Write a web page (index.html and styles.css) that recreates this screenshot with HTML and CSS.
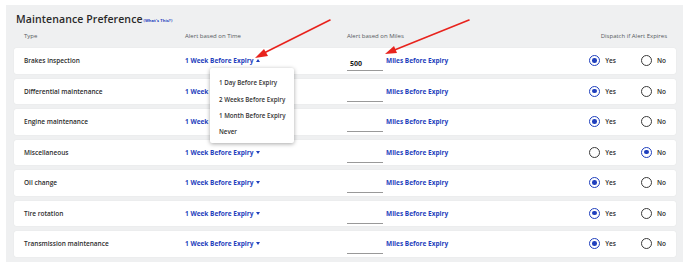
FILE: index.html
```html
<!DOCTYPE html>
<html>
<head>
<meta charset="utf-8">
<link rel="stylesheet" href="styles.css">
</head>
<body>
<div class="panel">
  <div class="title">Maintenance Preference <a class="whats">(What's This?)</a></div>
  <div class="grid head">
    <div>Type</div>
    <div>Alert based on Time</div>
    <div>Alert based on Miles</div>
    <div class="dispatch-h">Dispatch if Alert Expires</div>
  </div>

  <div class="grid row">
    <div class="name">Brakes inspection</div>
    <div class="time open">1 Week Before Expiry <span class="caret up"></span>
      <div class="menu">
        <div>1 Day Before Expiry</div>
        <div>2 Weeks Before Expiry</div>
        <div>1 Month Before Expiry</div>
        <div>Never</div>
      </div>
    </div>
    <div class="miles"><span class="input">500</span><span class="link">Miles Before Expiry</span></div>
    <div class="radios"><span class="radio on"></span><span class="lbl">Yes</span><span class="radio"></span><span class="lbl">No</span></div>
  </div>

  <div class="grid row">
    <div class="name">Differential maintenance</div>
    <div class="time">1 Week Before Expiry <span class="caret"></span></div>
    <div class="miles"><span class="input"></span><span class="link">Miles Before Expiry</span></div>
    <div class="radios"><span class="radio on"></span><span class="lbl">Yes</span><span class="radio"></span><span class="lbl">No</span></div>
  </div>

  <div class="grid row">
    <div class="name">Engine maintenance</div>
    <div class="time">1 Week Before Expiry <span class="caret"></span></div>
    <div class="miles"><span class="input"></span><span class="link">Miles Before Expiry</span></div>
    <div class="radios"><span class="radio on"></span><span class="lbl">Yes</span><span class="radio"></span><span class="lbl">No</span></div>
  </div>

  <div class="grid row">
    <div class="name">Miscellaneous</div>
    <div class="time">1 Week Before Expiry <span class="caret"></span></div>
    <div class="miles"><span class="input"></span><span class="link">Miles Before Expiry</span></div>
    <div class="radios"><span class="radio"></span><span class="lbl">Yes</span><span class="radio on"></span><span class="lbl">No</span></div>
  </div>

  <div class="grid row">
    <div class="name">Oil change</div>
    <div class="time">1 Week Before Expiry <span class="caret"></span></div>
    <div class="miles"><span class="input"></span><span class="link">Miles Before Expiry</span></div>
    <div class="radios"><span class="radio on"></span><span class="lbl">Yes</span><span class="radio"></span><span class="lbl">No</span></div>
  </div>

  <div class="grid row">
    <div class="name">Tire rotation</div>
    <div class="time">1 Week Before Expiry <span class="caret"></span></div>
    <div class="miles"><span class="input"></span><span class="link">Miles Before Expiry</span></div>
    <div class="radios"><span class="radio on"></span><span class="lbl">Yes</span><span class="radio"></span><span class="lbl">No</span></div>
  </div>

  <div class="grid row">
    <div class="name">Transmission maintenance</div>
    <div class="time">1 Week Before Expiry <span class="caret"></span></div>
    <div class="miles"><span class="input"></span><span class="link">Miles Before Expiry</span></div>
    <div class="radios"><span class="radio on"></span><span class="lbl">Yes</span><span class="radio"></span><span class="lbl">No</span></div>
  </div>
</div>

<svg class="arrows" width="688" height="271" viewBox="0 0 688 271">
  <g stroke="#e8231d" stroke-width="1.6" fill="none" stroke-linecap="round">
    <line x1="330" y1="20" x2="262" y2="54"/>
    <line x1="469" y1="20" x2="392" y2="51"/>
  </g>
  <g fill="#e8231d">
    <polygon points="255,58 264,49 268,56"/>
    <polygon points="385,54 394,46 397,53"/>
  </g>
</svg>
</body>
</html>
```
FILE: styles.css
```css
html, body {
  margin: 0;
  padding: 0;
  background: #ffffff;
}
body {
  font-family: "Open Sans", "Noto Sans", sans-serif;
  color: #2b2b2b;
  width: 688px;
  height: 271px;
  position: relative;
  overflow: hidden;
}
.panel {
  margin: 5px 5px 0 6px;
  background: #eff0f1;
  padding: 7px 7px 7px 8px;
  height: 243px;
}
.title {
  font-size: 10.5px;
  font-weight: 600;
  color: #2a2a2a;
  line-height: 14px;
  height: 14px;
  padding-left: 2px;
  letter-spacing: 0.1px;
}
.whats {
  font-size: 4px;
  color: #1f3fbd;
  font-weight: 700;
  vertical-align: 1px;
  margin-left: -2px;
}
.grid {
  display: grid;
  grid-template-columns: 161px 162px 1fr auto;
  align-items: center;
  padding: 0 10px 0 10px;
}
.head {
  height: 12px;
  margin-top: 4px;
  margin-bottom: 6px;
  font-size: 6px;
  color: #555a60;
}
.dispatch-h {
  text-align: right;
  margin-right: -1px;
}
.row {
  background: #ffffff;
  height: 25.5px;
  margin-bottom: 5px;
  border-radius: 2px;
  box-shadow: 0 0 1px rgba(0,0,0,0.12);
  font-size: 6.5px;
  font-weight: 600;
}
.name {
  color: #2d2d2d;
}
.time {
  color: #1f3fbd;
  font-weight: 700;
  position: relative;
  white-space: nowrap;
}
.caret {
  display: inline-block;
  width: 0;
  height: 0;
  border-left: 2.8px solid transparent;
  border-right: 2.8px solid transparent;
  border-top: 3.2px solid #1f3fbd;
  vertical-align: 1px;
  margin-left: 1px;
}
.caret.up {
  border-top: none;
  border-bottom: 3.2px solid #1f3fbd;
}
.menu {
  position: absolute;
  left: 25px;
  top: 12px;
  width: 84px;
  height: 75px;
  background: #ffffff;
  border-radius: 2px;
  box-shadow: 0 1px 4px rgba(0,0,0,0.35);
  z-index: 5;
  color: #333;
  font-weight: 600;
  font-size: 6.2px;
  padding-top: 7px;
  box-sizing: border-box;
}
.menu div {
  height: 16.3px;
  line-height: 16.3px;
  padding-left: 9px;
}
.miles {
  display: flex;
  align-items: center;
  white-space: nowrap;
}
.input {
  width: 36px;
  height: 15px;
  line-height: 16px;
  border-bottom: 1.5px solid #999999;
  color: #1a1a1a;
  padding-left: 3px;
  box-sizing: border-box;
  margin-top: 6px;
  font-weight: 700;
  align-self: flex-start;
  font-size: 7px;
}
.miles .link {
  color: #1f3fbd;
  font-weight: 700;
  margin-left: 3px;
}
.radios {
  display: flex;
  align-items: center;
}
.radio {
  width: 11px;
  height: 11px;
  border-radius: 50%;
  border: 1.2px solid #3a3a3a;
  box-sizing: border-box;
  position: relative;
  margin-left: 25px;
}
.radios .radio:first-child {
  margin-left: 0;
}
.radio.on {
  border-color: #1f3fbd;
}
.radio.on::after {
  content: "";
  position: absolute;
  left: 2px;
  top: 2px;
  width: 4.6px;
  height: 4.6px;
  border-radius: 50%;
  background: #1f3fbd;
}
.lbl {
  margin-left: 5px;
  color: #2d2d2d;
  font-size: 6.5px;
}
.arrows {
  position: absolute;
  left: 0;
  top: 0;
  pointer-events: none;
}
```
